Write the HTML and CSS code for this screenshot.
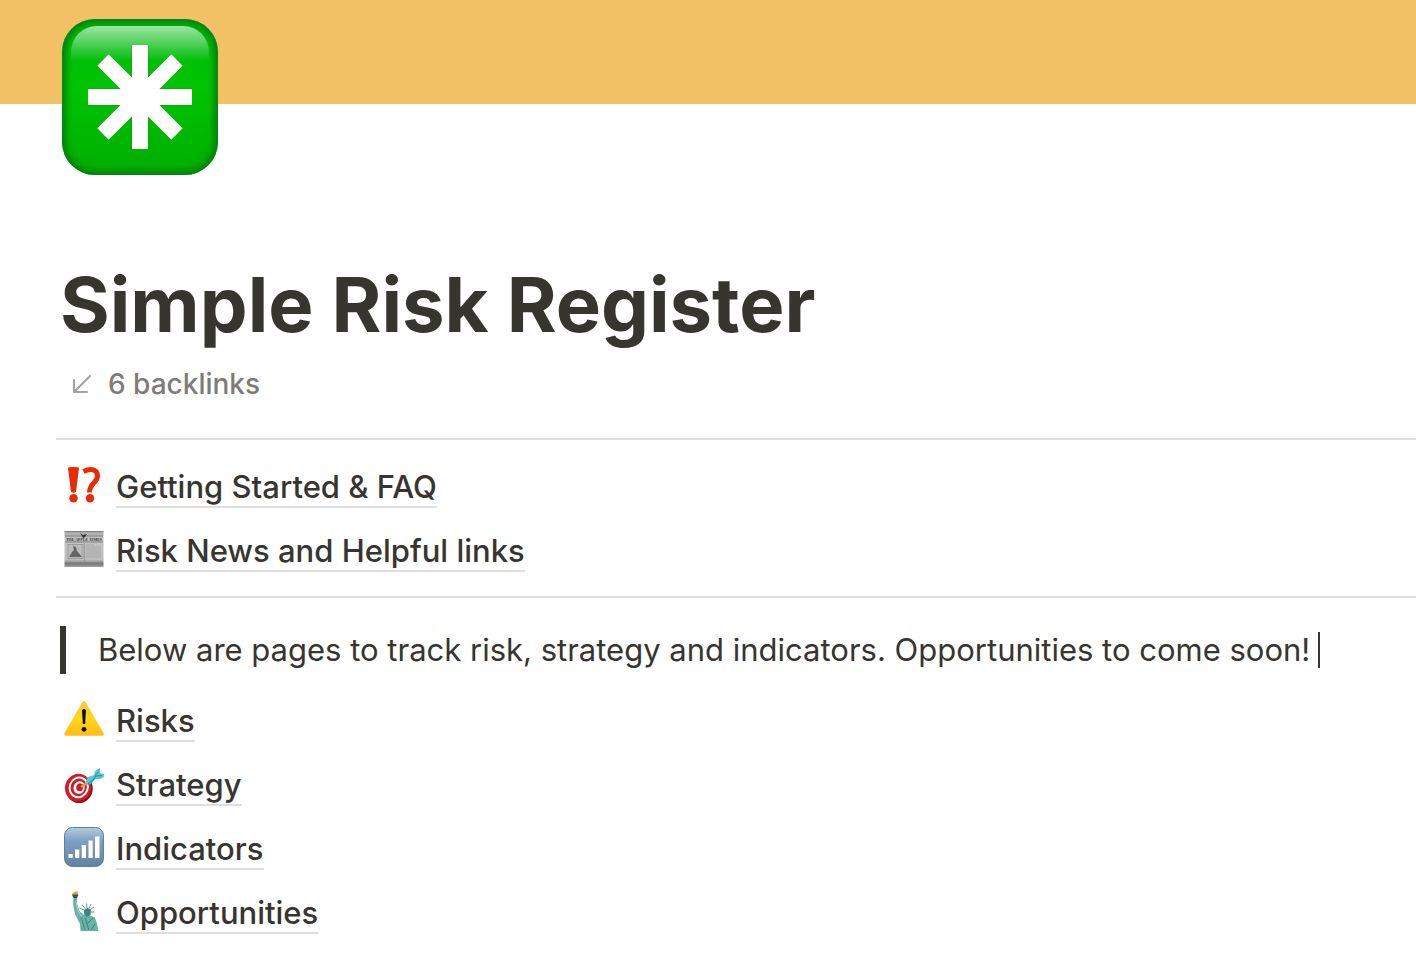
FILE: index.html
```html
<!DOCTYPE html>
<html lang="en">
<head>
    <meta charset="UTF-8">
    <meta name="viewport" content="width=device-width, initial-scale=1.0">
    <title>Simple Risk Register</title>
    <link rel="stylesheet" href="styles.css">
</head>
<body>
    <div class="cover"></div>
    <main class="page">
        <svg class="page-icon" viewBox="0 0 156 156" aria-hidden="true">
            <defs>
                <linearGradient id="green" x1="0" y1="0" x2="0" y2="1">
                    <stop offset="0" stop-color="#00b812"/>
                    <stop offset="0.45" stop-color="#00c400"/>
                    <stop offset="1" stop-color="#00ad00"/>
                </linearGradient>
                <linearGradient id="gloss" x1="0" y1="0" x2="0" y2="1">
                    <stop offset="0" stop-color="#fff" stop-opacity="0.62"/>
                    <stop offset="1" stop-color="#fff" stop-opacity="0"/>
                </linearGradient>
                <filter id="soft" x="-10%" y="-10%" width="120%" height="120%">
                    <feGaussianBlur stdDeviation="3"/>
                </filter>
                <clipPath id="tile"><rect width="156" height="156" rx="33"/></clipPath>
            </defs>
            <g clip-path="url(#tile)">
                <rect width="156" height="156" fill="url(#green)"/>
                <rect width="156" height="156" rx="33" fill="none" stroke="#007a08" stroke-width="8" filter="url(#soft)"/>
                <path d="M9 42V33A26 26 0 0 1 35 7H121A26 26 0 0 1 147 33V42Z" fill="url(#gloss)"/>
            </g>
            <g transform="translate(78 78)">
                <path d="M-52 0H52M0-52V52M-37-37L37 37M-37 37L37-37" stroke="#087d10" stroke-opacity="0.5" stroke-width="17"/>
                <path d="M-52 0H52M0-52V52M-37-37L37 37M-37 37L37-37" stroke="#fff" stroke-width="16"/>
            </g>
        </svg>

        <h1 class="title">Simple Risk Register</h1>
        <button type="button" class="backlinks">
            <svg class="arrow" viewBox="0 0 20 20" aria-hidden="true">
                <path d="M18 2L2 18M2 6V18H15" fill="none" stroke="#a5a4a0" stroke-width="2.2" stroke-linecap="round" stroke-linejoin="round"/>
            </svg>
            6 backlinks
        </button>

        <hr>
        <nav class="links">
            <div class="row">
                <svg class="icon" viewBox="0 0 40 40" aria-hidden="true">
                    <g fill="#e92b05">
                        <path d="M4 3Q4 2 9.5 2T15 3L12 27Q9.5 28.5 7 27Z"/>
                        <circle cx="9.5" cy="33.3" r="4.2"/>
                        <circle cx="26" cy="33.3" r="4.2"/>
                    </g>
                    <path d="M19.5 6.5C27 2.500 33.5 4.5 33.5 11C33.5 18 25.5 18 25.500 27.500" fill="none" stroke="#e92b05" stroke-width="5"/>
                </svg>
                <a href="#getting-started">Getting Started &amp; FAQ</a>
            </div>
            <div class="row">
                <svg class="icon" viewBox="0 0 40 40" aria-hidden="true">
                    <defs>
                        <linearGradient id="paper" x1="0" y1="0" x2="0" y2="1">
                            <stop offset="0" stop-color="#a5a5a5"/>
                            <stop offset="0.2" stop-color="#c4c4c4"/>
                            <stop offset="0.8" stop-color="#bdbdbd"/>
                            <stop offset="0.9" stop-color="#777"/>
                            <stop offset="1" stop-color="#a0a0a0"/>
                        </linearGradient>
                    </defs>
                    <rect x="0.5" y="2" width="39" height="36" fill="url(#paper)"/>
                    <path d="M0.5 2.5H39.5M1 7H39M1 13H39" stroke="#808080"/>
                    <path d="M16 4L19 6L23 5L21 8L19 9L18 7Z" fill="#333"/>
                    <text class="masthead" x="20" y="12" text-anchor="middle">THE APPLE TIMES</text>
                    <rect x="4" y="15.5" width="15" height="14" fill="#bbb" stroke="#888" stroke-width="0.6"/>
                    <path d="M5 28L8 23L10 21L9 17L12 18L13 22L18 28Z" fill="#666"/>
                    <path d="M22 16H30M22 18H37M22 20H37M22 22H37M22 24H37M22 26H37M22 28H37" stroke="#a2a2a2" stroke-width="0.7"/>
                    <path d="M20.5 14V37" stroke="#888" stroke-width="0.6"/>
                </svg>
                <a href="#news">Risk News and Helpful links</a>
            </div>
        </nav>

        <hr>
        <blockquote class="quote">Below are pages to track risk, strategy and indicators. Opportunities to come soon!<span class="caret"></span></blockquote>

        <nav class="links">
            <div class="row">
                <svg class="icon" viewBox="0 0 40 40" aria-hidden="true">
                    <defs>
                        <linearGradient id="yellow" x1="0" y1="0" x2="0" y2="1">
                            <stop offset="0" stop-color="#ffc43a"/>
                            <stop offset="0.5" stop-color="#ffd91c"/>
                            <stop offset="1" stop-color="#ffbe16"/>
                        </linearGradient>
                    </defs>
                    <path d="M20 4L38 35H2Z" fill="url(#yellow)" stroke="url(#yellow)" stroke-width="3.5" stroke-linejoin="round"/>
                    <path d="M18 11Q20 9 22 11L21.2 25H18.8Z" fill="#111"/>
                    <circle cx="20" cy="30.3" r="2.4" fill="#111"/>
                </svg>
                <a href="#risks">Risks</a>
            </div>
            <div class="row">
                <svg class="icon" viewBox="0 0 40 40" aria-hidden="true">
                    <g transform="rotate(20 15 25)">
                        <ellipse cx="16" cy="26" rx="13" ry="14" fill="#8d1119"/>
                        <ellipse cx="14" cy="25" rx="13" ry="14" fill="#d41c28"/>
                        <ellipse cx="14.5" cy="24.5" rx="10" ry="11" fill="#fff"/>
                        <ellipse cx="14.5" cy="24.5" rx="8" ry="9" fill="#cf1b26"/>
                        <ellipse cx="15" cy="24.5" rx="5.6" ry="6.4" fill="#fff"/>
                        <ellipse cx="15.5" cy="24" rx="3.5" ry="4" fill="#c91a25"/>
                    </g>
                    <path d="M17 24L23 20" stroke="#d5a631" stroke-width="2.5"/>
                    <path d="M21 20L24 14L30 12L31 8L36 5L36 10L40 11V14L36 16L31 16L28 20L24 22Z" fill="#56c8d6"/>
                    <path d="M24 21L29 17L32 13L38 12.5" fill="none" stroke="#2390a4" stroke-width="1.2"/>
                    <path d="M31 13L35 8" stroke="#2c9bb0"/>
                </svg>
                <a href="#strategy">Strategy</a>
            </div>
            <div class="row">
                <svg class="icon" viewBox="0 0 40 40" aria-hidden="true">
                    <defs>
                        <linearGradient id="blue" x1="0" y1="0" x2="0" y2="1">
                            <stop offset="0" stop-color="#b4cbe0"/>
                            <stop offset="0.35" stop-color="#7d9fc3"/>
                            <stop offset="1" stop-color="#6382a2"/>
                        </linearGradient>
                    </defs>
                    <rect x="0.5" y="0.5" width="39" height="39" rx="8" fill="url(#blue)" stroke="#5f7f9e"/>
                    <path d="M4.5 27H8.7V31H4.5ZM11 22.5H15.3V31H11ZM17.7 18H22V31H17.7ZM24.5 13.5H28.7V31H24.5ZM31 9.5H35.5V31H31Z" fill="#fff"/>
                </svg>
                <a href="#indicators">Indicators</a>
            </div>
            <div class="row">
                <svg class="icon" viewBox="0 0 40 40" aria-hidden="true">
                    <path d="M8 3L10 1L14 0L13.5 4H8.5Z" fill="#e9a52c"/>
                    <path d="M8 3.5H14.5L13 7H9.5Z" fill="#35505a"/>
                    <path d="M9.5 7H13L13 12L15.5 20L20 24L25 24L31 26.5L33 33L34.5 40H16.5L16 33L11 23L9 13Z" fill="#68b3a5"/>
                    <path d="M20 19Q24 15 27 19L26.5 24L23 26L20 23Z" fill="#3f857e"/>
                    <path d="M20 19L15.5 17M21 17.5L18 13.5M23 17L22.5 12.5M25 17L27 13M26.5 18.5L30 16M27 21L30.5 21" stroke="#4f8f88" stroke-width="0.9"/>
                    <path d="M17 26L21 39M21 27L25 39M29 27L23 33M31 33L27 39" fill="none" stroke="#358078" stroke-width="0.9"/>
                    <path d="M12 11L14 20L18 26" fill="none" stroke="#a5dccb"/>
                </svg>
                <a href="#opportunities">Opportunities</a>
            </div>
        </nav>
    </main>
</body>
</html>
```
FILE: styles.css
```css
* {
    box-sizing: border-box;
}
body {
    margin: 0;
    font-family: Inter, "Liberation Sans", sans-serif;
    font-size: 31px;
    color: #37352f;
    background: #fff;
}
.cover {
    height: 104px;
    background: #f2c166;
}
.page {
    padding-left: 56px;
}
.page-icon {
    display: block;
    position: relative;
    width: 156px;
    height: 156px;
    margin: -85px 0 81px 6px;
}
.title {
    margin: 0 0 8px 4px;
    font-size: 76px;
    line-height: 96px;
    font-weight: 700;
}
.backlinks {
    display: flex;
    align-items: center;
    gap: 16px;
    height: 48px;
    margin-bottom: 30px;
    padding: 0 16px;
    border: none;
    background: none;
    font-family: inherit;
    font-size: 28px;
    font-weight: 500;
    color: #7d7c78;
    cursor: pointer;
}
.arrow {
    width: 20px;
    height: 20px;
}
hr {
    height: 2px;
    margin: 0;
    border: none;
    background: #dededd;
}
.links {
    padding: 16px 8px 12px;
}
.row {
    display: flex;
    align-items: center;
    gap: 12px;
    height: 64px;
}
.icon {
    width: 40px;
    height: 40px;
    margin-bottom: 6px;
}
.row a {
    border-bottom: 2px solid #dededd;
    color: inherit;
    font-weight: 500;
    line-height: 38px;
    text-decoration: none;
}
.masthead {
    font-family: "Liberation Serif", serif;
    font-size: 4px;
    font-weight: 700;
    fill: #333;
}
.quote {
    display: flex;
    align-items: center;
    gap: 8px;
    margin: 28px 4px 0;
    padding-left: 32px;
    border-left: 6px solid #37352f;
    line-height: 48px;
}
.caret {
    width: 2px;
    height: 36px;
    background: #37352f;
}
```
